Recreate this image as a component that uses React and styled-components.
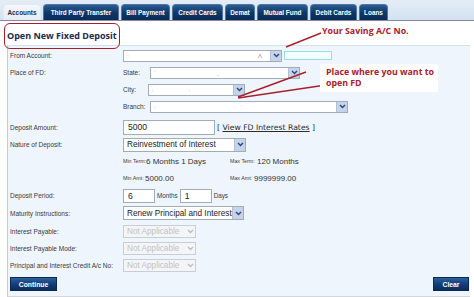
import React from 'react'
import styled, { createGlobalStyle } from 'styled-components'

const Global = createGlobalStyle`
  html, body { margin: 0; padding: 0; background: #fff; }
  body { width: 474px; height: 297px; overflow: hidden; font-family: "Liberation Sans", Arial, sans-serif; }
`

const Page = styled.div`
  position: relative;
  width: 474px;
  height: 297px;
`

const TabBar = styled.div`
  display: flex;
  align-items: flex-end;
  gap: 2px;
  height: 20px;
  padding-left: 3px;
  background: linear-gradient(180deg, #e4edf6 0%, #d3e2f0 100%);
  border-bottom: 1px solid #8c86a6;
`

const Tab = styled.div`
  box-sizing: border-box;
  width: ${p => p.w}px;
  height: 16px;
  display: flex;
  align-items: center;
  justify-content: center;
  border-radius: 4px 4px 0 0;
  font-size: 6.4px;
  font-weight: bold;
  white-space: nowrap;
  color: ${p => (p.active ? '#1c2f52' : '#fff')};
  background: ${p => (p.active ? 'linear-gradient(180deg, #f4f7fb 0%, #e6edf5 100%)' : 'linear-gradient(180deg, #2a5b93 0%, #0d3666 55%, #0a2c57 100%)')};
  border: 1px solid ${p => (p.active ? '#e2e9f1' : '#4f75a3')};
  border-bottom: none;
`

const TitleRow = styled.div`
  height: 24px;
  display: flex;
  align-items: center;
  padding-left: 7px;
`

const Title = styled.h1`
  margin: 0;
  font-family: "Open Sans", sans-serif;
  font-size: 9px;
  font-weight: 700;
  color: #1b2a4c;
  padding-top: 4px;
`

const Panel = styled.div`
  margin: 0 4px 0 7px;
  padding-top: 1px;
  background: #eef5fc;
  border-top: 1px solid #d4e0ec;
  border-left: 1px solid #c3cdd8;
  border-bottom: 1px solid #d2d7dd;
`

const Row = styled.div`
  display: grid;
  grid-template-columns: 113px 1fr;
  align-items: center;
  height: ${p => p.h}px;
  margin-top: ${p => p.mt || 0}px;
  padding-left: 2px;
`

const Label = styled.div`
  font-size: 6.5px;
  color: #3a3a3a;
  white-space: nowrap;
`

const Field = styled.div`
  display: flex;
  align-items: center;
`

const SubLabel = styled.span`
  width: ${p => p.w}px;
  font-size: 6.5px;
  color: #3a3a3a;
`

const SelectBox = styled.div`
  box-sizing: border-box;
  width: ${p => p.w}px;
  height: ${p => p.h}px;
  display: flex;
  align-items: stretch;
  background: ${p => (p.disabled ? '#f3f5f7' : '#fff')};
  border: 1px solid ${p => (p.disabled ? '#c9ced4' : '#a3abb5')};
`

const SelectText = styled.span`
  flex: 1;
  display: flex;
  align-items: center;
  justify-content: space-between;
  padding: 0 ${p => (p.scrap ? 8 : 1)}px 0 3px;
  font-size: 8.2px;
  color: ${p => (p.disabled ? '#bfc3c8' : '#222')};
  white-space: nowrap;
  overflow: hidden;
`

const Scrap = styled.span`
  font-size: 6px;
  color: #8a8f96;
`

const Arrow = styled.span`
  width: 10px;
  display: flex;
  align-items: center;
  justify-content: center;
  background: ${p => (p.disabled ? 'transparent' : '#c6d4eb')};
  border-left: 1px solid ${p => (p.disabled ? 'transparent' : '#b2c0d8')};
`

const TextInput = styled.div`
  box-sizing: border-box;
  width: ${p => p.w}px;
  height: ${p => p.h}px;
  display: flex;
  align-items: center;
  padding-left: 4px;
  font-size: 8.6px;
  color: #222;
  background: ${p => p.bg || '#fff'};
  border: 1px solid ${p => p.bd || '#a3abb5'};
  margin-left: ${p => p.ml || 0}px;
`

const Link = styled.span`
  margin-left: 2px;
  font-family: "DejaVu Sans", sans-serif;
  font-size: 7.7px;
  color: #2b2b2b;
  white-space: nowrap;
  span { text-decoration: underline; }
`

const Small = styled.span`
  font-size: 6.3px;
  color: #3a3a3a;
  margin-left: ${p => p.ml || 0}px;
`

const TermLabel = styled.span`
  width: ${p => p.w}px;
  font-size: 5.3px;
  color: #3a3a3a;
  white-space: nowrap;
`

const Value = styled.span`
  width: ${p => (p.w ? p.w + 'px' : 'auto')};
  font-size: 8px;
  color: #333;
  white-space: nowrap;
`

const ButtonRow = styled.div`
  height: 19px;
  display: flex;
  justify-content: space-between;
  align-items: flex-start;
  padding: 3px 1px 0 2px;
`

const Button = styled.div`
  box-sizing: border-box;
  width: ${p => p.w}px;
  height: 14px;
  display: flex;
  align-items: center;
  justify-content: center;
  font-size: 6.8px;
  font-weight: bold;
  color: #fff;
  background: linear-gradient(180deg, #2c609b 0%, #12407a 50%, #0a2d5a 100%);
  border: 1px solid #0a2a52;
`

const Overlay = styled.div`
  position: absolute;
  inset: 0;
  pointer-events: none;
`

const Boxed = styled.div`
  position: absolute;
  left: 4px;
  top: 23px;
  width: 114px;
  height: 24px;
  border: 1.5px solid #a6202c;
  border-radius: 6px;
`

const Note = styled.div`
  position: absolute;
  left: ${p => p.x}px;
  top: ${p => p.y}px;
  font-family: "Open Sans", sans-serif;
  font-size: 8.8px;
  font-weight: 700;
  line-height: 11px;
  color: #a8202c;
  background: ${p => (p.white ? '#fff' : 'transparent')};
  padding: ${p => (p.white ? '3px 4px 3px 6px' : '0')};
  white-space: nowrap;
`

const Lines = styled.svg`
  position: absolute;
  left: 0;
  top: 0;
`

const Chevron = ({ disabled }) => (
  <svg width="7" height="5" viewBox="0 0 7 5">
    <path d="M1 1 L3.5 3.6 L6 1" fill="none" stroke={disabled ? '#b9bec5' : '#27477f'} strokeWidth="1.4" />
  </svg>
)

const Select = ({ w, h = 12, text, scraps, disabled }) => (
  <SelectBox w={w} h={h} disabled={disabled}>
    <SelectText disabled={disabled} scrap={!!scraps}>
      {text}
      {scraps && scraps.map((s, i) => <Scrap key={i}>{s}</Scrap>)}
    </SelectText>
    <Arrow disabled={disabled}><Chevron disabled={disabled} /></Arrow>
  </SelectBox>
)

const tabs = [
  ['Accounts', 38],
  ['Third Party Transfer', 76],
  ['Bill Payment', 49],
  ['Credit Cards', 51],
  ['Demat', 30],
  ['Mutual Fund', 51],
  ['Debit Cards', 47],
  ['Loans', 29],
]

const App = () => (
  <Page>
    <Global />
    <TabBar>
      {tabs.map(([name, w], i) => (
        <Tab key={name} w={w} active={i === 0}>{name}</Tab>
      ))}
    </TabBar>
    <TitleRow>
      <Title>Open New Fixed Deposit</Title>
    </TitleRow>
    <Panel>
      <Row h={17}>
        <Label>From Account:</Label>
        <Field>
          <Select w={159} scraps={[':', 'Λ']} />
          <TextInput w={48} h={9} ml={2} bg="#f0ffff" bd="#9fdede" />
        </Field>
      </Row>
      <Row h={17}>
        <Label>Place of FD:</Label>
        <Field>
          <SubLabel w={27}>State:</SubLabel>
          <Select w={150} scraps={['\u02d9', '\u02ce', '']} />
        </Field>
      </Row>
      <Row h={17}>
        <Label />
        <Field>
          <SubLabel w={25}>City:</SubLabel>
          <Select w={97} scraps={[':', ':', '']} />
        </Field>
      </Row>
      <Row h={17}>
        <Label />
        <Field>
          <SubLabel w={27}>Branch:</SubLabel>
          <Select w={198} scraps={[':', '\u02d9', '']} />
        </Field>
      </Row>
      <Row h={18} mt={3}>
        <Label>Deposit Amount:</Label>
        <Field>
          <TextInput w={92} h={15}>5000</TextInput>
          <Link>[ <span>View FD Interest Rates</span> ]</Link>
        </Field>
      </Row>
      <Row h={17}>
        <Label>Nature of Deposit:</Label>
        <Field>
          <Select w={123} h={14} text="Reinvestment of Interest" />
        </Field>
      </Row>
      <Row h={16}>
        <Label />
        <Field>
          <TermLabel w={23}>Min Term:</TermLabel>
          <Value w={84}>6 Months 1 Days</Value>
          <TermLabel w={27}>Max Term:</TermLabel>
          <Value>120 Months</Value>
        </Field>
      </Row>
      <Row h={18}>
        <Label />
        <Field>
          <TermLabel w={22}>Min Amt:</TermLabel>
          <Value w={85}>5000.00</Value>
          <TermLabel w={24}>Max Amt:</TermLabel>
          <Value>9999999.00</Value>
        </Field>
      </Row>
      <Row h={17}>
        <Label>Deposit Period:</Label>
        <Field>
          <TextInput w={32} h={14}>6</TextInput>
          <Small ml={2}>Months</Small>
          <TextInput w={32} h={14} ml={2}>1</TextInput>
          <Small ml={2}>Days</Small>
        </Field>
      </Row>
      <Row h={18}>
        <Label>Maturity Instructions:</Label>
        <Field>
          <Select w={121} h={14} text="Renew Principal and Interest" />
        </Field>
      </Row>
      <Row h={18}>
        <Label>Interest Payable:</Label>
        <Field>
          <Select w={73} h={13} text="Not Applicable" disabled />
        </Field>
      </Row>
      <Row h={17}>
        <Label>Interest Payable Mode:</Label>
        <Field>
          <Select w={73} h={13} text="Not Applicable" disabled />
        </Field>
      </Row>
      <Row h={17}>
        <Label>Principal and Interest Credit A/c No:</Label>
        <Field>
          <Select w={73} h={13} text="Not Applicable" disabled />
        </Field>
      </Row>
      <ButtonRow>
        <Button w={47}>Continue</Button>
        <Button w={36}>Clear</Button>
      </ButtonRow>
    </Panel>
    <Overlay>
      <Boxed />
      <Lines width="474" height="297">
        <g stroke="#a8202c" strokeWidth="1.4" fill="none">
          <line x1="286" y1="47" x2="321" y2="33" />
          <line x1="306" y1="72" x2="238" y2="97" />
          <line x1="326" y1="85" x2="238" y2="98" />
        </g>
      </Lines>
      <Note x={322} y={26}>Your Saving A/C No.</Note>
      <Note x={320} y={64} white>Place where you want to<br />open FD</Note>
    </Overlay>
  </Page>
)

export default App
